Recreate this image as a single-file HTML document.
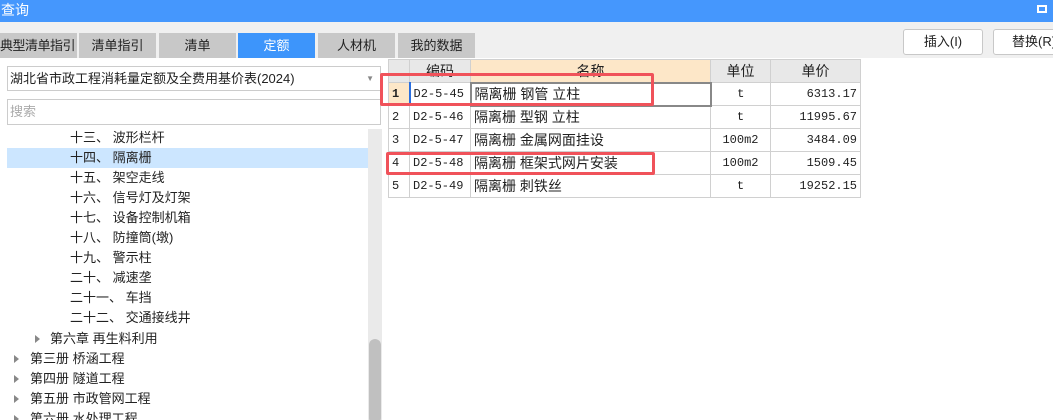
<!DOCTYPE html><html><head><meta charset="utf-8"><style>
*{margin:0;padding:0;box-sizing:border-box}
html,body{width:1053px;height:420px;overflow:hidden}
body{background:#f0f0f0;font-family:"Liberation Sans","Noto Sans CJK SC",sans-serif;font-size:13px;color:#222;position:relative}
.abs{position:absolute}
.title{left:0;top:0;width:1053px;height:22px;background:#4597fd;color:#fff;font-size:14px;line-height:20px;padding-left:1px}
.tab{top:33px;height:25px;background:#c8c8c8;text-align:center;line-height:25px;font-size:13px;white-space:nowrap;overflow:hidden}
.tab.on{background:#3d95fb;color:#fff}
.btn{top:29px;height:26px;background:#fff;border:1px solid #c8c8c8;border-radius:3px;text-align:center;line-height:24px}
.left{left:0;top:58px;width:388px;height:362px;background:#fff;overflow:hidden}
.tr{position:absolute;height:20px;line-height:20px;font-size:13px;white-space:nowrap}
.tri{position:absolute;width:0;height:0;border-left:5px solid #888;border-top:4px solid transparent;border-bottom:4px solid transparent}
table{border-collapse:collapse;font-size:13px}
td{border:1px solid #d0d0d0;height:23px;padding:0 3px;background:#fff;white-space:nowrap;line-height:20px}
.m{font-family:"Liberation Mono","Noto Sans CJK SC",monospace;font-size:12px}
.n{font-size:14px}
.red{position:absolute;border:3px solid #f0525a;border-radius:2px}
</style></head><body>
<div class="abs title">查询<span style="position:absolute;right:6px;top:5px;width:10px;height:8px;border:2px solid #fff"></span></div>
<div class="abs tab" style="left:0;width:77px;text-align:left;letter-spacing:-0.5px">典型清单指引</div>
<div class="abs tab" style="left:79px;width:77px">清单指引</div>
<div class="abs tab" style="left:159px;width:77px">清单</div>
<div class="abs tab on" style="left:238px;width:77px">定额</div>
<div class="abs tab" style="left:318px;width:77px">人材机</div>
<div class="abs tab" style="left:398px;width:77px">我的数据</div>
<div class="abs btn" style="left:903px;width:80px">插入(I)</div>
<div class="abs btn" style="left:993px;width:70px;text-align:left;padding-left:18px">替换(R)</div>
<div class="abs left">
<div class="abs" style="left:7px;top:8px;width:374px;height:25px;border:1px solid #ccc;line-height:23px;padding-left:2px">湖北省市政工程消耗量定额及全费用基价表(2024)<span style="position:absolute;right:6px;top:0;font-size:8px;color:#888">▼</span></div>
<div class="abs" style="left:7px;top:41px;width:374px;height:26px;border:1px solid #ccc;line-height:24px;padding-left:2px;color:#aaa">搜索</div>
<div class="abs" style="left:368px;top:71px;width:14px;height:291px;background:#eaeaea"></div>
<div class="abs" style="left:369px;top:281px;width:12px;height:85px;background:#c0c0c0;border-radius:6px"></div>
<div class="abs" style="left:7px;top:90px;width:361px;height:20px;background:#cce6ff"></div>
<div class="tr" style="left:70px;top:70px">十三、 波形栏杆</div>
<div class="tr" style="left:70px;top:90px">十四、 隔离栅</div>
<div class="tr" style="left:70px;top:110px">十五、 架空走线</div>
<div class="tr" style="left:70px;top:130px">十六、 信号灯及灯架</div>
<div class="tr" style="left:70px;top:150px">十七、 设备控制机箱</div>
<div class="tr" style="left:70px;top:170px">十八、 防撞筒(墩)</div>
<div class="tr" style="left:70px;top:190px">十九、 警示柱</div>
<div class="tr" style="left:70px;top:210px">二十、 减速垄</div>
<div class="tr" style="left:70px;top:230px">二十一、 车挡</div>
<div class="tr" style="left:70px;top:250px">二十二、 交通接线井</div>
<div class="tri" style="left:35px;top:277px"></div><div class="tr" style="left:50px;top:271px">第六章 再生料利用</div>
<div class="tri" style="left:14px;top:297px"></div><div class="tr" style="left:30px;top:291px">第三册 桥涵工程</div>
<div class="tri" style="left:14px;top:317px"></div><div class="tr" style="left:30px;top:311px">第四册 隧道工程</div>
<div class="tri" style="left:14px;top:337px"></div><div class="tr" style="left:30px;top:331px">第五册 市政管网工程</div>
<div class="tri" style="left:14px;top:357px"></div><div class="tr" style="left:30px;top:351px">第六册 水处理工程</div>
</div>
<div class="abs" style="left:388px;top:58px;width:665px;height:362px;background:#fff"></div>
<table class="abs" style="left:388px;top:59px">
<tr><td style="width:21px;background:#e8e8e8"></td><td class="n" style="width:61px;text-align:center;background:#e8e8e8">编码</td><td class="n" style="width:240px;text-align:center;background:#fde7c8">名称</td><td class="n" style="width:60px;text-align:center;background:#e8e8e8">单位</td><td class="n" style="width:90px;text-align:center;background:#e8e8e8">单价</td></tr>
<tr><td class="m" style="background:#fde7c8;font-weight:bold">1</td><td class="m" style="border-left:2px solid #2a6fe0">D2-5-45</td><td class="n" style="border:2px solid #888">隔离栅 钢管 立柱</td><td class="m" style="text-align:center">t</td><td class="m" style="text-align:right">6313.17</td></tr>
<tr><td class="m">2</td><td class="m">D2-5-46</td><td class="n">隔离栅 型钢 立柱</td><td class="m" style="text-align:center">t</td><td class="m" style="text-align:right">11995.67</td></tr>
<tr><td class="m">3</td><td class="m">D2-5-47</td><td class="n">隔离栅 金属网面挂设</td><td class="m" style="text-align:center">100m2</td><td class="m" style="text-align:right">3484.09</td></tr>
<tr><td class="m">4</td><td class="m">D2-5-48</td><td class="n">隔离栅 框架式网片安装</td><td class="m" style="text-align:center">100m2</td><td class="m" style="text-align:right">1509.45</td></tr>
<tr><td class="m">5</td><td class="m">D2-5-49</td><td class="n">隔离栅 刺铁丝</td><td class="m" style="text-align:center">t</td><td class="m" style="text-align:right">19252.15</td></tr>
</table>
<div class="red" style="left:380px;top:73px;width:274px;height:33px"></div>
<div class="red" style="left:386px;top:152px;width:269px;height:23px"></div>
</body></html>
